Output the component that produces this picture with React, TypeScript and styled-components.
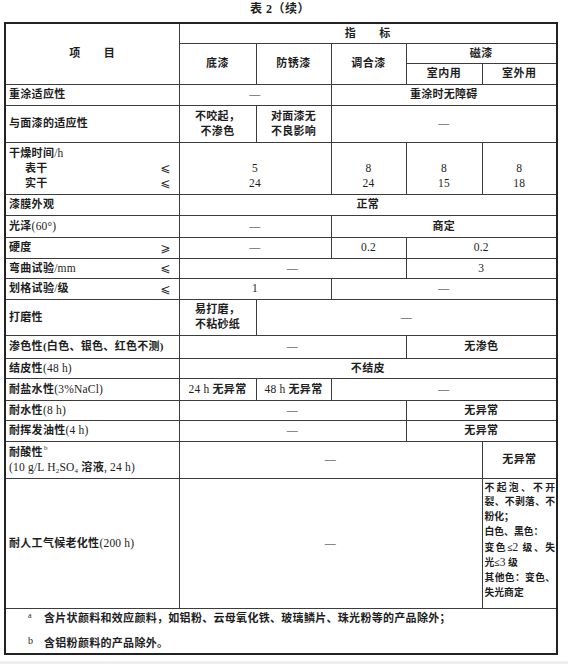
import React from 'react';
import styled, { createGlobalStyle } from 'styled-components';

const GlobalStyle = createGlobalStyle`
    html, body {
        margin: 0;
        padding: 0;
        background: #eeeeee;
    }
    body {
        font-family: "Liberation Serif", "Noto Sans CJK SC", serif;
        color: #1e1e1e;
    }
`;

const Page = styled.div`
    box-sizing: border-box;
    width: 568px;
    height: 661px;
    padding: 1px 0 0 4px;
    background: #ffffff;
`;

const Title = styled.div`
    width: 552px;
    height: 21px;
    text-align: center;
    font-size: 12px;
    line-height: 16px;
    font-weight: 700;
    letter-spacing: 0.5px;
`;

const Table = styled.table`
    width: 552px;
    table-layout: fixed;
    border-collapse: collapse;
    border: 2px solid #222;
    font-size: 11px;
    font-weight: 700;
`;

const Row = styled.tr<{ $h: number }>`
    height: ${(p) => p.$h}px;
`;

const Cell = styled.td<{ $left?: boolean }>`
    border: 1px solid #3c3c3c;
    padding: 0 3px;
    text-align: ${(p) => (p.$left ? 'left' : 'center')};
    vertical-align: middle;
    line-height: 15px;
    letter-spacing: 0.3px;
    white-space: nowrap;
`;

const HeadCell = styled(Cell)`
    letter-spacing: 0.5px;
`;

// latin text and numbers are set in a plain serif, as in the printed table
const L = styled.span`
    font-weight: 400;
    font-size: 11.5px;
    letter-spacing: 0.2px;
`;

const LabelLine = styled.div<{ $indent?: boolean }>`
    display: flex;
    justify-content: space-between;
    align-items: center;
    padding-left: ${(p) => (p.$indent ? 16 : 0)}px;
    padding-right: 5px;
`;

const Sign = styled.span`
    font-family: "DejaVu Sans", sans-serif;
    font-weight: 400;
    font-size: 12px;
    line-height: 14px;
`;

const Sup = styled.sup`
    font-size: 7px;
    font-weight: 400;
    line-height: 1;
    vertical-align: top;
    margin-left: 1px;
`;

const Sub = styled.sub`
    font-size: 7px;
    line-height: 1;
    vertical-align: -2px;
`;

const WeatherCell = styled(Cell)`
    padding: 0 1px 5px 2px;
    text-align: left;
    font-size: 9.8px;
    line-height: 14.7px;
    letter-spacing: 0;
`;

const Line = styled.div<{ $justify?: boolean }>`
    white-space: nowrap;
    text-align: ${(p) => (p.$justify ? 'justify' : 'left')};
    text-align-last: ${(p) => (p.$justify ? 'justify' : 'left')};
`;

const NoteCell = styled(Cell)`
    padding: 0 0 0 22px;
    text-align: left;
    vertical-align: top;
`;

const Note = styled.div`
    display: flex;
    line-height: 19px;
    & + & {
        margin-top: 6px;
    }
`;

const Marker = styled.span<{ $small?: boolean }>`
    width: 16px;
    font-size: ${(p) => (p.$small ? 8 : 10)}px;
    font-weight: 400;
    line-height: 13px;
`;

const Dash = () => <span>—</span>;

function App() {
    return (
        <Page>
            <GlobalStyle />
            <Title>表 2（续）</Title>
            <Table>
                <colgroup>
                    <col style={{ width: 174 }} />
                    <col style={{ width: 77 }} />
                    <col style={{ width: 75 }} />
                    <col style={{ width: 75 }} />
                    <col style={{ width: 76 }} />
                    <col style={{ width: 75 }} />
                </colgroup>
                <tbody>
                    <Row $h={20}>
                        <HeadCell rowSpan={3}>项　　目</HeadCell>
                        <HeadCell colSpan={5}>指　　标</HeadCell>
                    </Row>
                    <Row $h={20}>
                        <HeadCell rowSpan={2}>底漆</HeadCell>
                        <HeadCell rowSpan={2}>防锈漆</HeadCell>
                        <HeadCell rowSpan={2}>调合漆</HeadCell>
                        <HeadCell colSpan={2}>磁漆</HeadCell>
                    </Row>
                    <Row $h={21}>
                        <HeadCell>室内用</HeadCell>
                        <HeadCell>室外用</HeadCell>
                    </Row>

                    <Row $h={21}>
                        <Cell $left>重涂适应性</Cell>
                        <Cell colSpan={2}><Dash /></Cell>
                        <Cell colSpan={3}>重涂时无障碍</Cell>
                    </Row>
                    <Row $h={37}>
                        <Cell $left>与面漆的适应性</Cell>
                        <Cell>不咬起，<br />不渗色</Cell>
                        <Cell>对面漆无<br />不良影响</Cell>
                        <Cell colSpan={3}><Dash /></Cell>
                    </Row>
                    <Row $h={52}>
                        <Cell $left>
                            <div>干燥时间<L>/h</L></div>
                            <LabelLine $indent>表干<Sign>⩽</Sign></LabelLine>
                            <LabelLine $indent>实干<Sign>⩽</Sign></LabelLine>
                        </Cell>
                        <Cell colSpan={2}>&nbsp;<br /><L>5</L><br /><L>24</L></Cell>
                        <Cell>&nbsp;<br /><L>8</L><br /><L>24</L></Cell>
                        <Cell>&nbsp;<br /><L>8</L><br /><L>15</L></Cell>
                        <Cell>&nbsp;<br /><L>8</L><br /><L>18</L></Cell>
                    </Row>
                    <Row $h={21}>
                        <Cell $left>漆膜外观</Cell>
                        <Cell colSpan={5}>正常</Cell>
                    </Row>
                    <Row $h={22}>
                        <Cell $left>光泽<L>(60°)</L></Cell>
                        <Cell colSpan={2}><Dash /></Cell>
                        <Cell colSpan={3}>商定</Cell>
                    </Row>
                    <Row $h={21}>
                        <Cell $left><LabelLine>硬度<Sign>⩾</Sign></LabelLine></Cell>
                        <Cell colSpan={2}><Dash /></Cell>
                        <Cell><L>0.2</L></Cell>
                        <Cell colSpan={2}><L>0.2</L></Cell>
                    </Row>
                    <Row $h={20}>
                        <Cell $left><LabelLine><span>弯曲试验<L>/mm</L></span><Sign>⩽</Sign></LabelLine></Cell>
                        <Cell colSpan={3}><Dash /></Cell>
                        <Cell colSpan={2}><L>3</L></Cell>
                    </Row>
                    <Row $h={21}>
                        <Cell $left><LabelLine><span>划格试验<L>/</L>级</span><Sign>⩽</Sign></LabelLine></Cell>
                        <Cell colSpan={2}><L>1</L></Cell>
                        <Cell colSpan={3}><Dash /></Cell>
                    </Row>
                    <Row $h={36}>
                        <Cell $left>打磨性</Cell>
                        <Cell>易打磨，<br />不粘砂纸</Cell>
                        <Cell colSpan={4}><Dash /></Cell>
                    </Row>
                    <Row $h={23}>
                        <Cell $left>渗色性(白色、银色、红色不测)</Cell>
                        <Cell colSpan={3}><Dash /></Cell>
                        <Cell colSpan={2}>无渗色</Cell>
                    </Row>
                    <Row $h={20}>
                        <Cell $left>结皮性<L>(48 h)</L></Cell>
                        <Cell colSpan={5}>不结皮</Cell>
                    </Row>
                    <Row $h={22}>
                        <Cell $left>耐盐水性<L>(3%NaCl)</L></Cell>
                        <Cell><L>24 h</L> 无异常</Cell>
                        <Cell><L>48 h</L> 无异常</Cell>
                        <Cell colSpan={3}><Dash /></Cell>
                    </Row>
                    <Row $h={20}>
                        <Cell $left>耐水性<L>(8 h)</L></Cell>
                        <Cell colSpan={3}><Dash /></Cell>
                        <Cell colSpan={2}>无异常</Cell>
                    </Row>
                    <Row $h={21}>
                        <Cell $left>耐挥发油性<L>(4 h)</L></Cell>
                        <Cell colSpan={3}><Dash /></Cell>
                        <Cell colSpan={2}>无异常</Cell>
                    </Row>
                    <Row $h={37}>
                        <Cell $left>
                            耐酸性<Sup>b</Sup>
                            <br />
                            <L>(10 g/L H<Sub>2</Sub>SO<Sub>4</Sub> </L>溶液<L>, 24 h)</L>
                        </Cell>
                        <Cell colSpan={4}><Dash /></Cell>
                        <Cell>无异常</Cell>
                    </Row>
                    <Row $h={130}>
                        <Cell $left>耐人工气候老化性<L>(200 h)</L></Cell>
                        <Cell colSpan={4}><Dash /></Cell>
                        <WeatherCell>
                            <Line $justify>不起泡、不开</Line>
                            <Line $justify>裂、不剥落、不</Line>
                            <Line>粉化；</Line>
                            <Line>白色、黑色：</Line>
                            <Line $justify>变色≤<L>2</L> 级、失</Line>
                            <Line>光≤<L>3</L> 级</Line>
                            <Line $justify>其他色：变色、</Line>
                            <Line>失光商定</Line>
                        </WeatherCell>
                    </Row>
                    <Row $h={44}>
                        <NoteCell colSpan={6}>
                            <Note>
                                <Marker $small>a</Marker>
                                含片状颜料和效应颜料，如铝粉、云母氧化铁、玻璃鳞片、珠光粉等的产品除外；
                            </Note>
                            <Note>
                                <Marker>b</Marker>
                                含铝粉颜料的产品除外。
                            </Note>
                        </NoteCell>
                    </Row>
                </tbody>
            </Table>
        </Page>
    );
}

export default App;
